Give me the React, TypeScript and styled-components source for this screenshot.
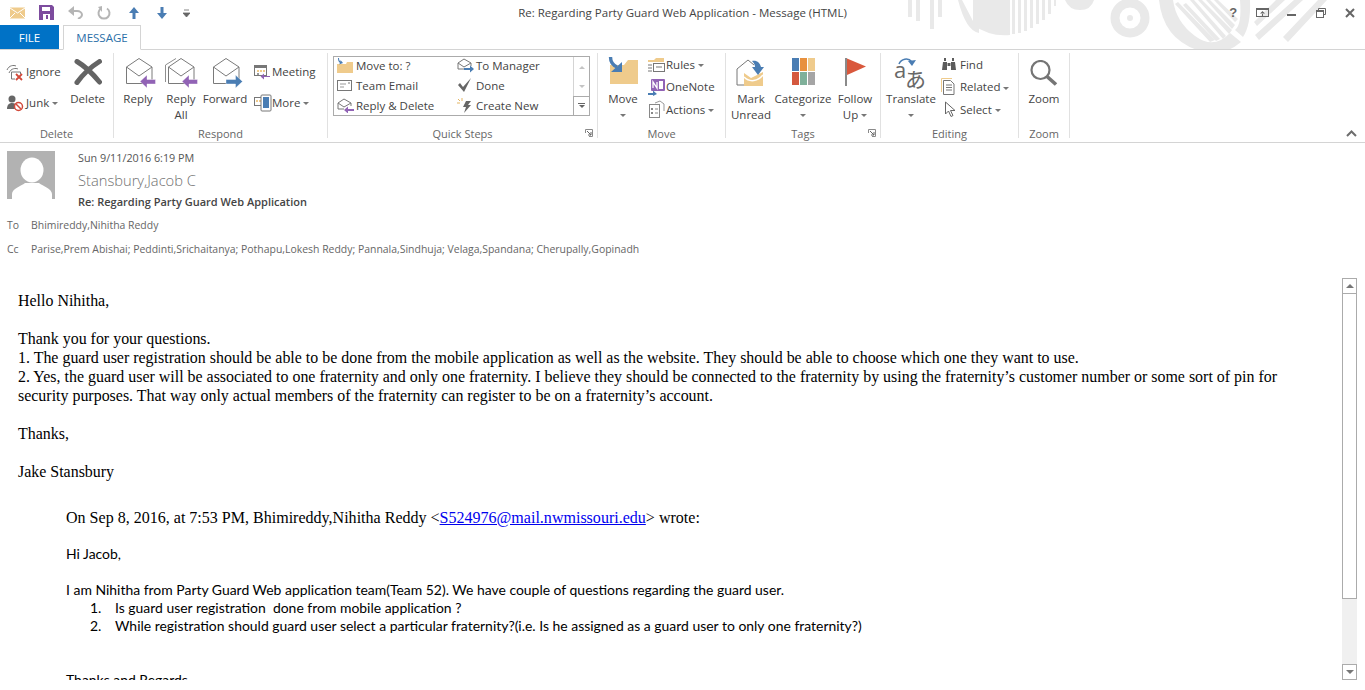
import React from "react";
import styled, { createGlobalStyle } from "styled-components";

const GlobalStyle = createGlobalStyle`
    html, body {
        margin: 0;
        padding: 0;
        background: #fff;
    }
    body {
        font-family: "Open Sans", "Liberation Sans", sans-serif;
        overflow: hidden;
    }
`;

const PURPLE = "#9163b5";
const BLUE = "#4a7db3";
const FOLDER = "#efcb8c";
const GRAY = "#6d6d6d";

// ---- icons ----

const Envelope = ({ arrow }: { arrow: "reply" | "all" | "forward" }) => {
    const shift = arrow === "all" ? -1 : 0;
    return (
        <svg width="36" height="31" viewBox="0 0 36 31" fill="none">
            {arrow === "all" && (
                <path d="M2.500 24V7L13 .5" stroke="#8f8f8f" strokeWidth="1" />
            )}
            <g transform={`translate(${shift} 0)`}>
                <path
                    d="M6.500 25.500V9L19 .5 32 9v16.500z"
                    fill="#fff"
                    stroke="#7a7a7a"
                    strokeWidth="1"
                />
                <path d="M6.500 9L19 18 32 9" stroke="#7a7a7a" strokeWidth="1" />
                {arrow === "forward" ? (
                    <path d="M35.500 23.500L28.500 17v4.500H19v4.500h9.500V30z" fill={BLUE} stroke="#fff" strokeWidth=".4" />
                ) : (
                    <path d="M20 23.500L27 17v4.500h8.500v4.500H27V30z" fill={PURPLE} stroke="#fff" strokeWidth=".4" />
                )}
            </g>
        </svg>
    );
};

const DeleteX = () => (
    <svg width="28" height="26" viewBox="0 0 28 26" fill="none">
        <path
            d="M3 2.500Q14 9 25.500 23M25.500 2.500Q12 11 3 23.500"
            stroke="#646464"
            strokeWidth="5"
            strokeLinecap="round"
        />
    </svg>
);

const IgnoreIcon = () => (
    <svg width="18" height="18" viewBox="0 0 18 18" fill="none">
        <path d="M1 7c2-5 7-5 9-4" stroke="#777" />
        <path d="M3 10c2-5 7-5 9-4" stroke="#777" />
        <path d="M5.500 16V9h9v2M5.500 16H9" stroke="#777" />
        <path d="M10 11l6 6M16 11l-6 6" stroke="#d2493a" strokeWidth="1.800" />
    </svg>
);

const JunkIcon = () => (
    <svg width="18" height="18" viewBox="0 0 18 18" fill="none">
        <circle cx="6" cy="5" r="3.500" fill="#666" />
        <path d="M1 15c0-4 2-6 5-6s4 1 5 2l-2 4z" fill="#666" />
        <circle cx="12.500" cy="12.500" r="4" fill="#fff" stroke="#d2493a" strokeWidth="1.500" />
        <path d="M10 10l5 5" stroke="#d2493a" strokeWidth="1.500" />
    </svg>
);

const MeetingIcon = () => (
    <svg width="18" height="16" viewBox="0 0 18 16" fill="none">
        <rect x="1.500" y="1.500" width="12" height="10" fill="#fff" stroke="#777" />
        <path d="M2 2h11v2H2z" fill="#777" />
        <path d="M4 6h2v2H4zM7 6h2v2H7zM10 6h2v2h-2z" fill={FOLDER} />
        <path d="M4 9h2v2H4z" fill="#999" />
        <path d="M17 12H11V9.500L7.500 12.500 11 15.500V13h6z" fill={PURPLE} />
    </svg>
);

const MoreIcon = () => (
    <svg width="19" height="18" viewBox="0 0 19 18" fill="none">
        <rect x="1.500" y="3.500" width="8" height="8" fill="#fff" stroke="#777" />
        <path d="M3 6h2v2H3zM6 6h2v2H6z" fill={FOLDER} />
        <rect x="8" y="1" width="10" height="16" rx="1" fill="#fff" stroke="#777" />
        <rect x="10" y="3" width="6" height="11" fill={BLUE} />
    </svg>
);

const MoveToIcon = () => (
    <svg width="17" height="15" viewBox="0 0 17 15">
        <path d="M0 6h9l1-2h6v11H0z" fill={FOLDER} />
        <path d="M2 0c0 2 .5 3 1.500 3.500V2L6 5 2 6.500 3 5C1.500 4 1 2 1 0z" fill={BLUE} />
    </svg>
);

const TeamEmailIcon = () => (
    <svg width="16" height="13" viewBox="0 0 16 13" fill="none">
        <rect x=".5" y="1.500" width="14" height="10" stroke="#777" />
        <path d="M3 5h6M3 8h4" stroke="#999" />
        <path d="M11 4h2" stroke="#777" />
    </svg>
);

const SmallOpenEnvelope = ({ color, dir }: { color: string; dir: "l" | "r" }) => (
    <svg width="18" height="15" viewBox="0 0 18 15" fill="none">
        <path d="M1 11V5l6-4 7 4v3M1 11h6M1 5l6 4 7-4" stroke="#777" />
        {dir === "r" ? (
            <path d="M7 10h6V7.500l4 3.500-4 3.500V12H7z" fill={color} />
        ) : (
            <path d="M17 11h-6V8.500L7 12l4 3.500V13h6z" fill={color} />
        )}
    </svg>
);

const CheckIcon = () => (
    <svg width="16" height="14" viewBox="0 0 16 14">
        <path d="M1 7l2-2 3 4 8-9-7 14z" fill="#666" />
    </svg>
);

const CreateNewIcon = () => (
    <svg width="16" height="15" viewBox="0 0 16 15">
        <path d="M1 1l2 2M5 0v3M0 5h3" stroke="#e3b564" strokeWidth="1" />
        <path d="M9 3h5l-3 4h3l-7 8 2-6H6z" fill="#666" />
    </svg>
);

const BigMoveIcon = () => (
    <svg width="30" height="28" viewBox="0 0 30 28" fill="none">
        <path d="M2 8h14l4-5h10v24H2z" fill={FOLDER} />
        <path d="M2.500 0c0 5 2 8 6.500 10" stroke={BLUE} strokeWidth="3.400" />
        <path d="M3 15h11V5z" fill={BLUE} />
    </svg>
);

const RulesIcon = () => (
    <svg width="18" height="17" viewBox="0 0 18 17" fill="none">
        <path d="M0 4h6l2-2h8v4H0z" fill={FOLDER} />
        <rect x="5.500" y="7.500" width="11" height="8" fill="#fff" stroke="#777" />
        <path d="M0 9h4M0 12h4M0 15h4" stroke="#777" />
        <path d="M8 11h6" stroke="#777" />
    </svg>
);

const OneNoteIcon = () => (
    <svg width="18" height="18" viewBox="0 0 18 18" fill="none">
        <rect x="3" y="1" width="14" height="12" fill={PURPLE} rx="1" />
        <path d="M5 10V4l4 6V4" stroke="#fff" strokeWidth="1.300" />
        <rect x="11" y="3" width="4" height="8" fill="#fff" />
        <path d="M0 15h5v-2.500l4 3.500-4 2v-1H0z" fill={BLUE} />
    </svg>
);

const ActionsIcon = () => (
    <svg width="18" height="18" viewBox="0 0 18 18" fill="none">
        <rect x="1.500" y="4.500" width="10" height="13" fill="#fff" stroke="#888" />
        <path d="M3 8h2v2H3zM3 12h2v2H3z" fill="#888" />
        <path d="M7 9h3M7 13h3" stroke="#888" />
        <path d="M7 3l5-2 4 3v7" stroke="#999" />
    </svg>
);

const MarkUnreadIcon = () => (
    <svg width="30" height="30" viewBox="0 0 30 30" fill="none">
        <path d="M1 12l11-9 6 5M1 12v16h8" stroke="#777" />
        <path d="M8 16l7 5 12-6v14H8z" fill={FOLDER} />
        <path d="M8 20c6 6 14 4 19-2" stroke="#fff" strokeWidth="1.500" />
        <path d="M16 4c5-1 8 2 9 6h3l-6 8-6-8h3c0-2-1-4-3-6z" fill={BLUE} />
    </svg>
);

const CategorizeGrid = styled.div`
    display: grid;
    grid-template-columns: repeat(3, 7px);
    grid-template-rows: repeat(2, 13px);
    gap: 1px;
`;

const Swatch = styled.span<{ $c: string }>`
    background: ${(p) => p.$c};
`;

const FlagIcon = () => (
    <svg width="21" height="28" viewBox="0 0 21 28">
        <rect x="0" y="0" width="2" height="28" fill="#8a8a8a" />
        <path d="M2 .5L21 8.500 2 17z" fill="#d9583c" />
    </svg>
);

const TranslateGlyph = styled.text<{ $size: number }>`
    font-family: "Open Sans", "Noto Sans CJK JP", sans-serif;
    font-size: ${(p) => p.$size}px;
    fill: #686868;
`;

const TranslateIcon = () => (
    <svg width="34" height="44" viewBox="0 -4 34 44" fill="none">
        <path d="M5 7c2-5 9-7 13-2" stroke={BLUE} strokeWidth="1.500" />
        <path d="M14 4l4 5 4-6z" fill={BLUE} />
        <TranslateGlyph x="0" y="21" $size={22}>a</TranslateGlyph>
        <TranslateGlyph x="11" y="30" $size={21}>あ</TranslateGlyph>
    </svg>
);

const FindIcon = () => (
    <svg width="16" height="14" viewBox="0 0 16 14">
        <path d="M1 13l1-8h4v8zM10 13V5h4l1 8zM3 1h2v3H3zM11 1h2v3h-2zM6.500 6h3v3h-3z" fill="#5c5c5c" />
    </svg>
);

const RelatedIcon = () => (
    <svg width="14" height="17" viewBox="0 0 14 17" fill="none">
        <path d="M.5 14V.5H11" stroke={FOLDER} />
        <path d="M2.500 16.500v-14h7l3.500 3.500v10.500z" fill="#fff" stroke="#777" />
        <path d="M5 7h6M5 9.500h6M5 12h6" stroke="#777" />
    </svg>
);

const SelectIcon = () => (
    <svg width="15" height="17" viewBox="0 0 15 17" fill="none">
        <path d="M4.500 1v12l3-3 2.500 5.500 2-1L9.500 9.500H14z" fill="#fff" stroke="#666" />
    </svg>
);

const ZoomIcon = () => (
    <svg width="28" height="26" viewBox="0 0 28 26" fill="none">
        <circle cx="10.500" cy="10" r="9" stroke="#757575" strokeWidth="2.200" />
        <path d="M17 16.500l9 8" stroke="#757575" strokeWidth="3.600" />
    </svg>
);

const Launcher = () => (
    <svg width="8" height="8" viewBox="0 0 8 8" fill="none">
        <path d="M.5 4V.5H7.500V7.500H4" stroke="#8a8a8a" />
        <path d="M2 2l4 4M6 3v3H3" stroke="#666" />
    </svg>
);

const TitleDecoration = () => (
    <svg width="440" height="50" viewBox="0 0 440 50" fill="#e9e9e9">
        <rect x="8" y="0" width="4" height="17" />
        <rect x="16" y="0" width="4" height="21" />
        <rect x="30" y="0" width="4" height="29" />
        <rect x="38" y="0" width="4" height="17" />
        <path d="M58 0h4l12 23v-23h5v33q-13-2-21-33z" />
        <path d="M73 0h37v35q-20 2-37-10z" />
        <path d="M112 0h3v34h-3zM118 0h3v33h-3zM124 0h3v31h-3zM130 0h3v28h-3zM136 0h3v24h-3zM142 0h3v20h-3zM148 0h3v14h-3zM154 0h2v6h-2z" />
        <path d="M165 0h29q-3 10-14 10t-15-10z" />
        <circle cx="230" cy="18" r="15" fill="none" stroke="#e9e9e9" strokeWidth="9" />
        <circle cx="230" cy="18" r="3" />
        <path d="M259 0h14q3 22 22 36t35-3l11 9q-20 17-44 8q-34-12-38-50z" />
        <path d="M290 0h4l32 36-3 3zM298 0h4l30 30-3 4zM306 0h4l25 25-3 4zM314 0h4l20 19-3 3zM275 4l3-2 37 38-5 2zM283 5l3-2 34 36-4 2z" />
        <path d="M340 0q2 25-5 30l8 7q8-12 7-37z" />
        <path d="M394 0h9l-44 40-4-5zM418 0h9l-39 42-5-5zM376 0h9l-28 26-3-4z" />
    </svg>
);

const QatEnvelope = () => (
    <svg width="15" height="12" viewBox="0 0 15 12">
        <rect width="15" height="11" y=".5" fill={FOLDER} />
        <path d="M0 1l7.500 5L15 1" fill="none" stroke="#fff" />
        <path d="M0 11l5-5M15 11l-5-5" stroke="#fff" />
    </svg>
);

const QatSave = () => (
    <svg width="15" height="15" viewBox="0 0 15 15">
        <path d="M0 0h13l2 2v13H0z" fill="#7d4c9e" />
        <rect x="3" y="2" width="8" height="4" fill="#fff" />
        <rect x="4" y="9" width="7" height="6" fill="#fff" />
        <rect x="7" y="10" width="2" height="4" fill="#7d4c9e" />
    </svg>
);

const QatUndo = () => (
    <svg width="15" height="13" viewBox="0 0 15 13" fill="none">
        <path d="M2 5h7c3 0 5 2 5 4s-2 3-4 4" stroke="#b5b5b5" strokeWidth="2" />
        <path d="M6 0L0 5l6 5z" fill="#b5b5b5" />
    </svg>
);

const QatRedo = () => (
    <svg width="14" height="14" viewBox="0 0 14 14" fill="none">
        <path d="M4 2.500a5.500 5.500 0 1 0 6 0" stroke="#b5b5b5" strokeWidth="2" />
        <path d="M5 0v6L1 1z" fill="#b5b5b5" />
    </svg>
);

const QatArrow = ({ down }: { down?: boolean }) => (
    <svg width="10" height="12" viewBox="0 0 10 12">
        {down ? (
            <path d="M5 12L10 6H6.500V0h-3v6H0z" fill={BLUE} />
        ) : (
            <path d="M5 0L10 6H6.500v6h-3V6H0z" fill={BLUE} />
        )}
    </svg>
);

const QatMore = () => (
    <svg width="7" height="8" viewBox="0 0 7 8">
        <path d="M1 1h5M0 4h7l-3.500 4z" stroke="#666" fill="#666" strokeWidth=".8" />
    </svg>
);

const WinHelp = styled.span`
    font: bold 13px "Liberation Sans", sans-serif;
    color: #666;
    width: 10px;
    text-align: center;
`;

const WinDisplay = () => (
    <svg width="13" height="10" viewBox="0 0 13 10" fill="none">
        <rect x=".5" y=".5" width="12" height="8" stroke="#666" />
        <path d="M1 1.500h11" stroke="#666" />
        <path d="M6.500 3L4 5.500h5zM6 5h1v3H6z" fill="#666" />
    </svg>
);

const WinMin = () => (
    <svg width="10" height="10" viewBox="0 0 10 10">
        <rect y="6" width="9" height="2" fill="#666" />
    </svg>
);

const WinRestore = () => (
    <svg width="10" height="10" viewBox="0 0 10 10" fill="none">
        <path d="M2.500 2.500V.5h7v6H7.500" stroke="#666" />
        <rect x=".5" y="2.500" width="7" height="7" fill="#fff" stroke="#666" />
        <path d="M1 3.500h6" stroke="#666" />
    </svg>
);

const WinClose = () => (
    <svg width="10" height="10" viewBox="0 0 10 10">
        <path d="M1 1l8 8M9 1l-8 8" stroke="#666" strokeWidth="2" />
    </svg>
);

// ---- layout ----

const Page = styled.div`
    width: 1365px;
    height: 690px;
    overflow: hidden;
    display: flex;
    flex-direction: column;
    background: #fff;
    position: relative;
`;

const TitleBar = styled.div`
    height: 25px;
    flex: none;
    display: flex;
    align-items: center;
    position: relative;
`;

const Decoration = styled.div`
    position: absolute;
    left: 900px;
    top: 0;
    line-height: 0;
`;

const Qat = styled.div`
    display: flex;
    align-items: center;
    width: 440px;
    position: relative;
`;

const QatSlot = styled.span<{ $x: number }>`
    width: ${(p) => p.$x}px;
    display: flex;
    justify-content: center;
    flex: none;
`;

const WindowTitle = styled.div`
    position: absolute;
    left: 0;
    width: 1365px;
    text-align: center;
    font-size: 11.500px;
    color: #444;
`;

const WinButtons = styled.div`
    margin-left: auto;
    display: flex;
    align-items: center;
    position: relative;
`;

const WinSlot = styled.span`
    width: 29.300px;
    display: flex;
    justify-content: center;
`;

const TabRow = styled.div`
    height: 25px;
    flex: none;
    display: flex;
    border-bottom: 1px solid #d4d4d4;
    box-sizing: border-box;
    position: relative;
`;

const FileTab = styled.div`
    width: 59px;
    height: 24px;
    background: #0072c6;
    color: #fff;
    font-size: 11.500px;
    display: flex;
    align-items: center;
    justify-content: center;
`;

const MessageTab = styled.div`
    margin-left: 4px;
    width: 78px;
    height: 25px;
    box-sizing: border-box;
    border: 1px solid #d4d4d4;
    border-bottom: 1px solid #fff;
    background: #fff;
    color: #2a6fa8;
    font-size: 11.500px;
    display: flex;
    align-items: center;
    justify-content: center;
`;

const Ribbon = styled.div`
    height: 93px;
    flex: none;
    box-sizing: border-box;
    display: flex;
    border-bottom: 1px solid #d4d4d4;
    color: #444;
    font-size: 11.500px;
`;

const Group = styled.section<{ $w: number }>`
    width: ${(p) => p.$w}px;
    flex: none;
    box-sizing: border-box;
    display: flex;
    flex-direction: column;
    position: relative;
    &::after {
        content: "";
        position: absolute;
        right: 0;
        top: 3px;
        bottom: 4px;
        width: 1px;
        background: #e1e1e1;
    }
`;

const GroupBody = styled.div`
    height: 76px;
    display: flex;
`;

const GroupLabel = styled.div`
    height: 16px;
    line-height: 16px;
    text-align: center;
    font-size: 11px;
    color: #666;
    margin-right: 1px;
`;

const LauncherSlot = styled.span`
    position: absolute;
    right: 5px;
    bottom: 5px;
    line-height: 0;
`;

const Large = styled.div<{ $w: number; $ml?: number }>`
    width: ${(p) => p.$w}px;
    margin-left: ${(p) => p.$ml ?? 0}px;
    flex: none;
    display: flex;
    flex-direction: column;
    align-items: center;
    text-align: center;
    line-height: 16px;
    white-space: nowrap;
`;

const LargeIcon = styled.div<{ $top: number }>`
    height: 41px;
    display: flex;
    align-items: flex-start;
    justify-content: center;
    padding-top: ${(p) => p.$top}px;
    box-sizing: border-box;
    line-height: 0;
`;

const Caret = styled.span`
    display: inline-block;
    width: 0;
    height: 0;
    border-left: 3px solid transparent;
    border-right: 3px solid transparent;
    border-top: 3px solid #777;
    vertical-align: middle;
`;

const CaretLine = styled.div`
    height: 16px;
    display: flex;
    align-items: center;
`;

const SmallCol = styled.div<{ $rowH: number; $top: number; $left: number }>`
    margin-left: ${(p) => p.$left}px;
    padding-top: ${(p) => p.$top}px;
    display: grid;
    grid-auto-rows: ${(p) => p.$rowH}px;
`;

const SmallBtn = styled.div<{ $iconW: number }>`
    display: grid;
    grid-template-columns: ${(p) => p.$iconW}px auto;
    align-items: center;
    white-space: nowrap;
    ${Caret} {
        margin-left: 3px;
    }
`;

const QuickBox = styled.div`
    margin: 6px 0 0 5px;
    width: 257px;
    height: 60px;
    box-sizing: border-box;
    border: 1px solid #ababab;
    display: flex;
`;

const QuickGrid = styled.div`
    flex: 1;
    display: grid;
    grid-template-columns: 120px auto;
    grid-auto-rows: 20px;
    padding: 0 0 0 3px;
    margin-top: -2px;
`;

const QuickItem = styled.div`
    display: grid;
    grid-template-columns: 19px auto;
    align-items: center;
    white-space: nowrap;
`;

const QuickScroll = styled.div`
    width: 15px;
    border-left: 1px solid #d4d4d4;
    display: grid;
    grid-template-rows: 1fr 1fr 1fr;
`;

const QuickArrow = styled.div<{ $last?: boolean; $down?: boolean }>`
    display: flex;
    align-items: center;
    justify-content: center;
    flex-direction: column;
    gap: 1px;
    border-top: ${(p) => (p.$last ? "1px solid #ababab" : "none")};
    margin-left: ${(p) => (p.$last ? "-1px" : "0")};
    border-left: ${(p) => (p.$last ? "1px solid #ababab" : "none")};
    &::before {
        content: "";
        width: ${(p) => (p.$last ? "7px" : "0")};
        border-top: ${(p) => (p.$last ? "1px solid #666" : "none")};
    }
    &::after {
        content: "";
        border-left: 3px solid transparent;
        border-right: 3px solid transparent;
        ${(p) =>
            p.$down
                ? `border-top: 3px solid ${p.$last ? "#666" : "#c4c4c4"};`
                : "border-bottom: 3px solid #c4c4c4;"}
    }
`;

const CollapseSlot = styled.div`
    margin-left: auto;
    align-self: flex-end;
    padding: 0 8px 5px 0;
    line-height: 0;
`;

const Header = styled.header`
    height: 135px;
    flex: none;
    box-sizing: border-box;
    padding: 8px 0 0 7px;
    color: #444;
`;

const HeaderTop = styled.div`
    display: flex;
    height: 62px;
`;

const Avatar = styled.div`
    width: 48px;
    height: 48px;
    background: #b2b2b2;
    line-height: 0;
`;

const HeaderText = styled.div`
    margin-left: 23px;
    display: flex;
    flex-direction: column;
`;

const DateLine = styled.div`
    font-size: 10.800px;
    line-height: 14px;
    color: #555;
`;

const Sender = styled.div`
    font-size: 14.700px;
    line-height: 22px;
    margin-top: 4px;
    font-weight: 300;
    color: #707070;
`;

const Subject = styled.div`
    font-size: 11px;
    line-height: 20px;
    margin-top: 1px;
    font-weight: 600;
    color: #444;
`;

const Recipients = styled.div`
    display: grid;
    grid-template-columns: 24px auto;
    font-size: 10.450px;
    line-height: 24px;
    color: #666;
`;

const MessageArea = styled.div`
    height: 402px;
    flex: none;
    display: flex;
    overflow: hidden;
`;

const Body = styled.main`
    width: 1342px;
    flex: none;
    box-sizing: border-box;
    padding: 13px 52px 0 18px;
    font-family: "Liberation Serif", "Times New Roman", serif;
    font-size: 15.950px;
    line-height: 19px;
    color: #000;
    overflow: hidden;
`;

const Para = styled.p<{ $gap?: number }>`
    margin: 0 0 ${(p) => p.$gap ?? 19}px;
`;

const Quote = styled.blockquote`
    margin: 27px 0 0 48px;
    font-size: 16.050px;
`;

const QuoteBody = styled.div`
    font-family: Lato, "Open Sans", sans-serif;
    font-size: 13.950px;
    line-height: 18px;
    margin-top: 18px;
`;

const QuoteList = styled.ol`
    margin: 0;
    padding-left: 49px;
    list-style: none;
    counter-reset: item;
`;

const QuoteItem = styled.li`
    display: flex;
    counter-increment: item;
    &::before {
        content: counter(item) ".";
        flex: none;
        width: 25px;
        margin-left: -25px;
    }
`;

const Spacer = styled.div<{ $h: number }>`
    height: ${(p) => p.$h}px;
`;

const MailLink = styled.span`
    color: #0000ee;
    text-decoration: underline;
`;

const ScrollBar = styled.div`
    width: 15px;
    flex: none;
    display: flex;
    flex-direction: column;
    background: #f0f0f0;
`;

const ScrollButton = styled.div`
    height: 16px;
    flex: none;
    box-sizing: border-box;
    border: 1px solid #ababab;
    background: #fff;
    display: flex;
    align-items: center;
    justify-content: center;
`;

const ScrollThumb = styled.div`
    height: 305px;
    flex: none;
    box-sizing: border-box;
    border: 1px solid #ababab;
    border-top-width: 0;
    background: #fff;
`;

const ScrollTrack = styled.div`
    flex: 1;
`;

const ArrowUp = styled.span`
    border-left: 4px solid transparent;
    border-right: 4px solid transparent;
    border-bottom: 4px solid #777;
`;

const ArrowDown = styled.span`
    border-left: 4px solid transparent;
    border-right: 4px solid transparent;
    border-top: 4px solid #777;
`;

const App = () => {
    return (
        <Page>
            <GlobalStyle />
            <TitleBar>
                <Decoration>
                    <TitleDecoration />
                </Decoration>
                <WindowTitle>
                    Re: Regarding Party Guard Web Application - Message (HTML)
                </WindowTitle>
                <Qat>
                    <QatSlot $x={34}><QatEnvelope /></QatSlot>
                    <QatSlot $x={25}><QatSave /></QatSlot>
                    <QatSlot $x={33}><QatUndo /></QatSlot>
                    <QatSlot $x={24}><QatRedo /></QatSlot>
                    <QatSlot $x={35}><QatArrow /></QatSlot>
                    <QatSlot $x={22}><QatArrow down /></QatSlot>
                    <QatSlot $x={26}><QatMore /></QatSlot>
                </Qat>
                <WinButtons>
                    <WinSlot><WinHelp>?</WinHelp></WinSlot>
                    <WinSlot><WinDisplay /></WinSlot>
                    <WinSlot><WinMin /></WinSlot>
                    <WinSlot><WinRestore /></WinSlot>
                    <WinSlot><WinClose /></WinSlot>
                </WinButtons>
            </TitleBar>

            <TabRow>
                <FileTab>FILE</FileTab>
                <MessageTab>MESSAGE</MessageTab>
            </TabRow>

            <Ribbon>
                <Group $w={114}>
                    <GroupBody>
                        <SmallCol $rowH={31} $top={6} $left={6}>
                            <SmallBtn $iconW={20}>
                                <IgnoreIcon />
                                <span>Ignore</span>
                            </SmallBtn>
                            <SmallBtn $iconW={20}>
                                <JunkIcon />
                                <span>Junk<Caret /></span>
                            </SmallBtn>
                        </SmallCol>
                        <Large $w={42} $ml={6}>
                            <LargeIcon $top={9}><DeleteX /></LargeIcon>
                            Delete
                        </Large>
                    </GroupBody>
                    <GroupLabel>Delete</GroupLabel>
                </Group>

                <Group $w={214}>
                    <GroupBody>
                        <Large $w={48}>
                            <LargeIcon $top={8}><Envelope arrow="reply" /></LargeIcon>
                            Reply
                        </Large>
                        <Large $w={38}>
                            <LargeIcon $top={8}><Envelope arrow="all" /></LargeIcon>
                            Reply
                            <br />
                            All
                        </Large>
                        <Large $w={50}>
                            <LargeIcon $top={8}><Envelope arrow="forward" /></LargeIcon>
                            Forward
                        </Large>
                        <SmallCol $rowH={31} $top={6} $left={3}>
                            <SmallBtn $iconW={19}>
                                <MeetingIcon />
                                <span>Meeting</span>
                            </SmallBtn>
                            <SmallBtn $iconW={19}>
                                <MoreIcon />
                                <span>More<Caret /></span>
                            </SmallBtn>
                        </SmallCol>
                    </GroupBody>
                    <GroupLabel>Respond</GroupLabel>
                </Group>

                <Group $w={270}>
                    <GroupBody>
                        <QuickBox>
                            <QuickGrid>
                                <QuickItem><MoveToIcon />Move to: ?</QuickItem>
                                <QuickItem><SmallOpenEnvelope color={BLUE} dir="r" />To Manager</QuickItem>
                                <QuickItem><TeamEmailIcon />Team Email</QuickItem>
                                <QuickItem><CheckIcon />Done</QuickItem>
                                <QuickItem><SmallOpenEnvelope color={PURPLE} dir="l" />Reply &amp; Delete</QuickItem>
                                <QuickItem><CreateNewIcon />Create New</QuickItem>
                            </QuickGrid>
                            <QuickScroll>
                                <QuickArrow />
                                <QuickArrow $down />
                                <QuickArrow $down $last />
                            </QuickScroll>
                        </QuickBox>
                    </GroupBody>
                    <GroupLabel>Quick Steps</GroupLabel>
                    <LauncherSlot><Launcher /></LauncherSlot>
                </Group>

                <Group $w={128}>
                    <GroupBody>
                        <Large $w={50}>
                            <LargeIcon $top={7}><BigMoveIcon /></LargeIcon>
                            Move
                            <CaretLine><Caret /></CaretLine>
                        </Large>
                        <SmallCol $rowH={22.500} $top={3} $left={0}>
                            <SmallBtn $iconW={18}>
                                <RulesIcon />
                                <span>Rules<Caret /></span>
                            </SmallBtn>
                            <SmallBtn $iconW={18}>
                                <OneNoteIcon />
                                <span>OneNote</span>
                            </SmallBtn>
                            <SmallBtn $iconW={18}>
                                <ActionsIcon />
                                <span>Actions<Caret /></span>
                            </SmallBtn>
                        </SmallCol>
                    </GroupBody>
                    <GroupLabel>Move</GroupLabel>
                </Group>

                <Group $w={155}>
                    <GroupBody>
                        <Large $w={50}>
                            <LargeIcon $top={7}><MarkUnreadIcon /></LargeIcon>
                            Mark
                            <br />
                            Unread
                        </Large>
                        <Large $w={54}>
                            <LargeIcon $top={8}>
                                <CategorizeGrid>
                                    <Swatch $c="#4a7db3" />
                                    <Swatch $c="#e8913e" />
                                    <Swatch $c="#efcb8c" />
                                    <Swatch $c="#d4583e" />
                                    <Swatch $c="#7fb09a" />
                                    <Swatch $c="#a5a5a5" />
                                </CategorizeGrid>
                            </LargeIcon>
                            Categorize
                            <CaretLine><Caret /></CaretLine>
                        </Large>
                        <Large $w={50}>
                            <LargeIcon $top={8}><FlagIcon /></LargeIcon>
                            Follow
                            <CaretLine>Up&nbsp;<Caret /></CaretLine>
                        </Large>
                    </GroupBody>
                    <GroupLabel>Tags</GroupLabel>
                    <LauncherSlot><Launcher /></LauncherSlot>
                </Group>

                <Group $w={138}>
                    <GroupBody>
                        <Large $w={60}>
                            <LargeIcon $top={3}><TranslateIcon /></LargeIcon>
                            Translate
                            <CaretLine><Caret /></CaretLine>
                        </Large>
                        <SmallCol $rowH={22.500} $top={3} $left={0}>
                            <SmallBtn $iconW={19}>
                                <FindIcon />
                                <span>Find</span>
                            </SmallBtn>
                            <SmallBtn $iconW={19}>
                                <RelatedIcon />
                                <span>Related<Caret /></span>
                            </SmallBtn>
                            <SmallBtn $iconW={19}>
                                <SelectIcon />
                                <span>Select<Caret /></span>
                            </SmallBtn>
                        </SmallCol>
                    </GroupBody>
                    <GroupLabel>Editing</GroupLabel>
                </Group>

                <Group $w={51}>
                    <GroupBody>
                        <Large $w={50}>
                            <LargeIcon $top={10}><ZoomIcon /></LargeIcon>
                            Zoom
                        </Large>
                    </GroupBody>
                    <GroupLabel>Zoom</GroupLabel>
                </Group>

                <CollapseSlot>
                    <svg width="11" height="7" viewBox="0 0 11 7" fill="none">
                        <path d="M1 6l4.500-4.500L10 6" stroke={GRAY} strokeWidth="2" />
                    </svg>
                </CollapseSlot>
            </Ribbon>

            <Header>
                <HeaderTop>
                    <Avatar>
                        <svg width="48" height="48" viewBox="0 0 48 48">
                            <ellipse cx="25" cy="19" rx="11.500" ry="12.500" fill="#fff" />
                            <path d="M5 48v-5c0-5 9-8 13-11h14c4 3 13 6 13 11v5z" fill="#fff" />
                        </svg>
                    </Avatar>
                    <HeaderText>
                        <DateLine>Sun 9/11/2016 6:19 PM</DateLine>
                        <Sender>Stansbury,Jacob C</Sender>
                        <Subject>Re: Regarding Party Guard Web Application</Subject>
                    </HeaderText>
                </HeaderTop>
                <Recipients>
                    <span>To</span>
                    <span>Bhimireddy,Nihitha Reddy</span>
                    <span>Cc</span>
                    <span>
                        Parise,Prem Abishai; Peddinti,Srichaitanya; Pothapu,Lokesh Reddy; Pannala,Sindhuja; Velaga,Spandana; Cherupally,Gopinadh
                    </span>
                </Recipients>
            </Header>

            <MessageArea>
                <Body>
                    <Para>Hello Nihitha,</Para>
                    <Para $gap={0}>Thank you for your questions.</Para>
                    <Para $gap={0}>
                        1. The guard user registration should be able to be done from the mobile application as well as the website. They should be able to choose which one they want to use.
                    </Para>
                    <Para>
                        2. Yes, the guard user will be associated to one fraternity and only one fraternity. I believe they should be connected to the fraternity by using the fraternity’s customer number or some sort of pin for security purposes. That way only actual members of the fraternity can register to be on a fraternity’s account.
                    </Para>
                    <Para>Thanks,</Para>
                    <Para>Jake Stansbury</Para>
                    <Quote>
                        On Sep 8, 2016, at 7:53 PM, Bhimireddy,Nihitha Reddy &lt;<MailLink>S524976@mail.nwmissouri.edu</MailLink>&gt; wrote:
                        <QuoteBody>
                            Hi Jacob,
                            <Spacer $h={18} />
                            I am Nihitha from Party Guard Web application team(Team 52). We have couple of questions regarding the guard user.
                            <QuoteList>
                                <QuoteItem>Is guard user registration&nbsp; done from mobile application ?</QuoteItem>
                                <QuoteItem>While registration should guard user select a particular fraternity?(i.e. Is he assigned as a guard user to only one fraternity?)</QuoteItem>
                            </QuoteList>
                            <Spacer $h={36} />
                            Thanks and Regards
                        </QuoteBody>
                    </Quote>
                </Body>
                <ScrollBar>
                    <ScrollButton><ArrowUp /></ScrollButton>
                    <ScrollThumb />
                    <ScrollTrack />
                    <ScrollButton><ArrowDown /></ScrollButton>
                </ScrollBar>
            </MessageArea>
        </Page>
    );
};

export default App;
